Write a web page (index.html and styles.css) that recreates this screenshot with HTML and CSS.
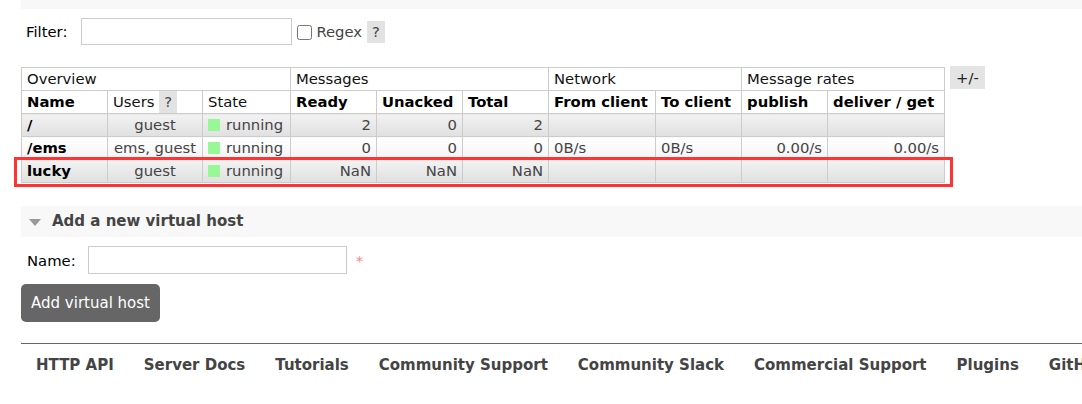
FILE: index.html
```html
<!DOCTYPE html>
<html lang="en">
<head>
  <meta charset="UTF-8">
  <meta name="viewport" content="width=device-width, initial-scale=1.0">
  <title>Virtual Hosts</title>
  <link rel="stylesheet" href="styles.css">
</head>
<body>
  <div class="main">
    <div class="top-bar"></div>
    <div class="filter">
      <label for="filter">Filter:</label>
      <input type="text" id="filter" class="filter-input">
      <input type="checkbox" id="regex" class="regex-box"><label for="regex" class="regex-label">Regex</label>
      <span class="help help-filter">?</span>
    </div>
    <div class="table-row">
      <table class="list">
        <colgroup>
          <col style="width:86px"><col style="width:95px"><col style="width:88px">
          <col style="width:86px"><col style="width:86px"><col style="width:86px">
          <col style="width:107px"><col style="width:86px"><col style="width:86px"><col style="width:117px">
        </colgroup>
        <thead>
          <tr class="group">
            <th colspan="3">Overview</th>
            <th colspan="3">Messages</th>
            <th colspan="2">Network</th>
            <th colspan="2">Message rates</th>
          </tr>
          <tr class="cols">
            <th>Name</th>
            <th class="plain">Users <span class="help">?</span></th>
            <th class="plain">State</th>
            <th>Ready</th>
            <th>Unacked</th>
            <th>Total</th>
            <th>From client</th>
            <th>To client</th>
            <th>publish</th>
            <th>deliver / get</th>
          </tr>
        </thead>
        <tbody>
          <tr class="alt1">
            <td class="name">/</td>
            <td class="c">guest</td>
            <td><span class="state"></span>running</td>
            <td class="r">2</td>
            <td class="r">0</td>
            <td class="r">2</td>
            <td></td><td></td><td></td><td></td>
          </tr>
          <tr class="alt2">
            <td class="name">/ems</td>
            <td class="c">ems, guest</td>
            <td><span class="state"></span>running</td>
            <td class="r">0</td>
            <td class="r">0</td>
            <td class="r">0</td>
            <td>0B/s</td>
            <td>0B/s</td>
            <td class="r">0.00/s</td>
            <td class="r">0.00/s</td>
          </tr>
          <tr class="alt1">
            <td class="name">lucky</td>
            <td class="c">guest</td>
            <td><span class="state"></span>running</td>
            <td class="r">NaN</td>
            <td class="r">NaN</td>
            <td class="r">NaN</td>
            <td></td><td></td><td></td><td></td>
          </tr>
        </tbody>
      </table>
      <span class="toggle">+/-</span>
    </div>
    <div class="highlight"></div>

    <div class="section">
      <h2 class="section-title"><span class="arrow"></span>Add a new virtual host</h2>
      <form class="add-form">
        <div class="field">
          <label for="vhost">Name:</label>
          <input type="text" id="vhost" class="name-input">
          <span class="mand">*</span>
        </div>
        <input type="submit" class="button" value="Add virtual host">
      </form>
    </div>

    <div class="footer">
      <a href="#">HTTP API</a>
      <a href="#">Server Docs</a>
      <a href="#">Tutorials</a>
      <a href="#">Community Support</a>
      <a href="#">Community Slack</a>
      <a href="#">Commercial Support</a>
      <a href="#">Plugins</a>
      <a href="#">GitHub</a>
    </div>
  </div>
</body>
</html>
```

FILE: styles.css
```css
body {
  margin: 0;
  font-family: "DejaVu Sans", Verdana, sans-serif;
  font-size: 14.8px;
  color: #000;
  overflow: hidden;
}
.main {
  position: relative;
  padding-left: 21px;
}
.top-bar {
  height: 9px;
  background-color: #f8f8f8;
}
.filter {
  display: flex;
  align-items: center;
  margin-top: 9px;
  padding-left: 5px;
  height: 27px;
}
.filter-input {
  width: 211px;
  height: 27px;
  box-sizing: border-box;
  margin: 0 0 0 14px;
  border: 1px solid #ccc;
}
.regex-box {
  width: 15px;
  height: 15px;
  margin: 2px 4px 0 5px;
}
.regex-label {
  color: #444;
}
.help {
  display: inline-block;
  background-color: #e2e2e2;
  color: #444;
  padding: 0 5px;
}
.help-filter {
  margin-left: 5px;
  line-height: 22px;
}
.table-row {
  display: flex;
  align-items: flex-start;
  margin-top: 22px;
}
.list {
  border-collapse: collapse;
  table-layout: fixed;
  width: 924px;
}
.list th,
.list td {
  border: 1px solid #ccc;
  padding: 2px 5px;
  line-height: 18px;
  text-align: left;
  white-space: nowrap;
  overflow: hidden;
}
.list th {
  font-weight: bold;
  color: #000;
}
.list .group th,
.list th.plain {
  font-weight: normal;
  color: #111;
}
.list th .help {
  margin: -2px 0;
  padding: 2px 5px;
  line-height: 18px;
}
.list td {
  color: #444;
}
.list td.name {
  font-weight: bold;
  color: #000;
}
.list td.c {
  text-align: center;
}
.list td.r {
  text-align: right;
}
.alt1 td {
  background: linear-gradient(#f2f2f2, #e0e0e0);
}
.alt2 td {
  background: linear-gradient(#ffffff, #f4f4f4);
}
.state {
  display: inline-block;
  width: 12px;
  height: 12px;
  background-color: #98f898;
  margin-right: 6px;
  vertical-align: -1px;
}
.toggle {
  margin-left: 5px;
  margin-top: -1px;
  background-color: #e4e4e4;
  color: #222;
  padding: 2px 6px;
  line-height: 19px;
}
.highlight {
  position: absolute;
  left: 14px;
  top: 157px;
  width: 939px;
  height: 30px;
  box-sizing: border-box;
  border: 3px solid #f33;
}
.section {
  margin-top: 23px;
}
.section-title {
  margin: 0;
  height: 31px;
  line-height: 31px;
  background-color: #f8f8f8;
  font-size: 15px;
  color: #444;
  display: flex;
  align-items: center;
}
.arrow {
  width: 0;
  height: 0;
  margin: 2px 11px 0 8px;
  border-left: 6.5px solid transparent;
  border-right: 6.5px solid transparent;
  border-top: 7px solid #999;
}
.field {
  display: flex;
  align-items: center;
  margin-top: 9px;
  padding-left: 6px;
  height: 28px;
}
.name-input {
  width: 259px;
  height: 28px;
  box-sizing: border-box;
  margin: 0 0 0 12px;
  border: 1px solid #ccc;
}
.mand {
  color: #f88;
  margin-left: 9px;
}
.button {
  display: block;
  margin-top: 10px;
  width: 139px;
  height: 38px;
  background-color: #666;
  color: #fff;
  border: none;
  border-radius: 5px;
  font-family: "DejaVu Sans", Verdana, sans-serif;
  font-size: 15px;
  padding: 0;
}
.footer {
  margin-top: 21px;
  border-top: 1px solid #666;
  padding: 11px 0 0 15px;
  display: flex;
  gap: 30px;
  white-space: nowrap;
  overflow: hidden;
}
.footer a {
  font-weight: bold;
  font-size: 15px;
  color: #444;
  text-decoration: none;
  line-height: 20px;
}
```
